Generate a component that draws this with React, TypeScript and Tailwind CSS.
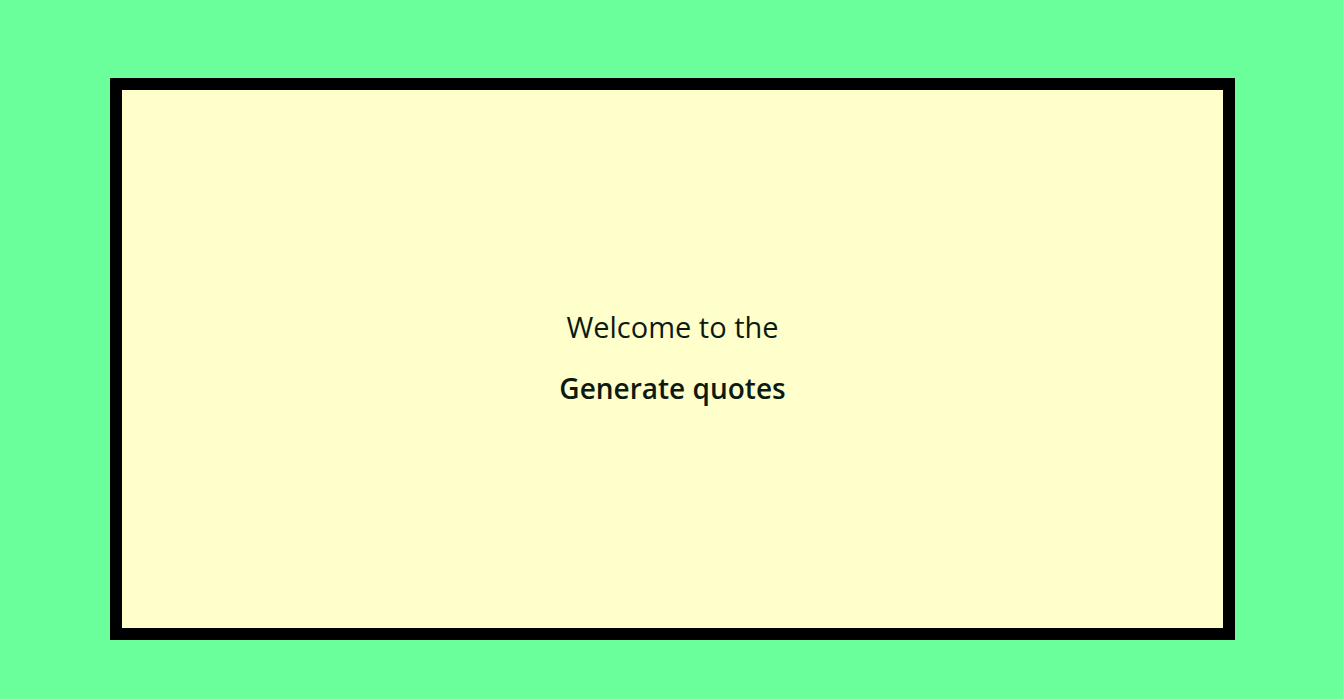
import React from 'react';

export default function App() {
  return (
    <div className="min-h-[699px] w-full bg-[#6aff9a] pt-[78px] font-['Open_Sans',sans-serif]">
      <div className="ml-[110px] flex h-[562px] w-[1125px] flex-col items-center justify-center border-[12px] border-black bg-[#ffffcc] pb-[4px] text-[#0c1a10]">
        <p className="text-[29px] font-normal leading-[38px]">Welcome to the</p>
        <p className="mt-[23px] text-[28px] font-semibold leading-[38px]">Generate quotes</p>
      </div>
    </div>
  );
}
